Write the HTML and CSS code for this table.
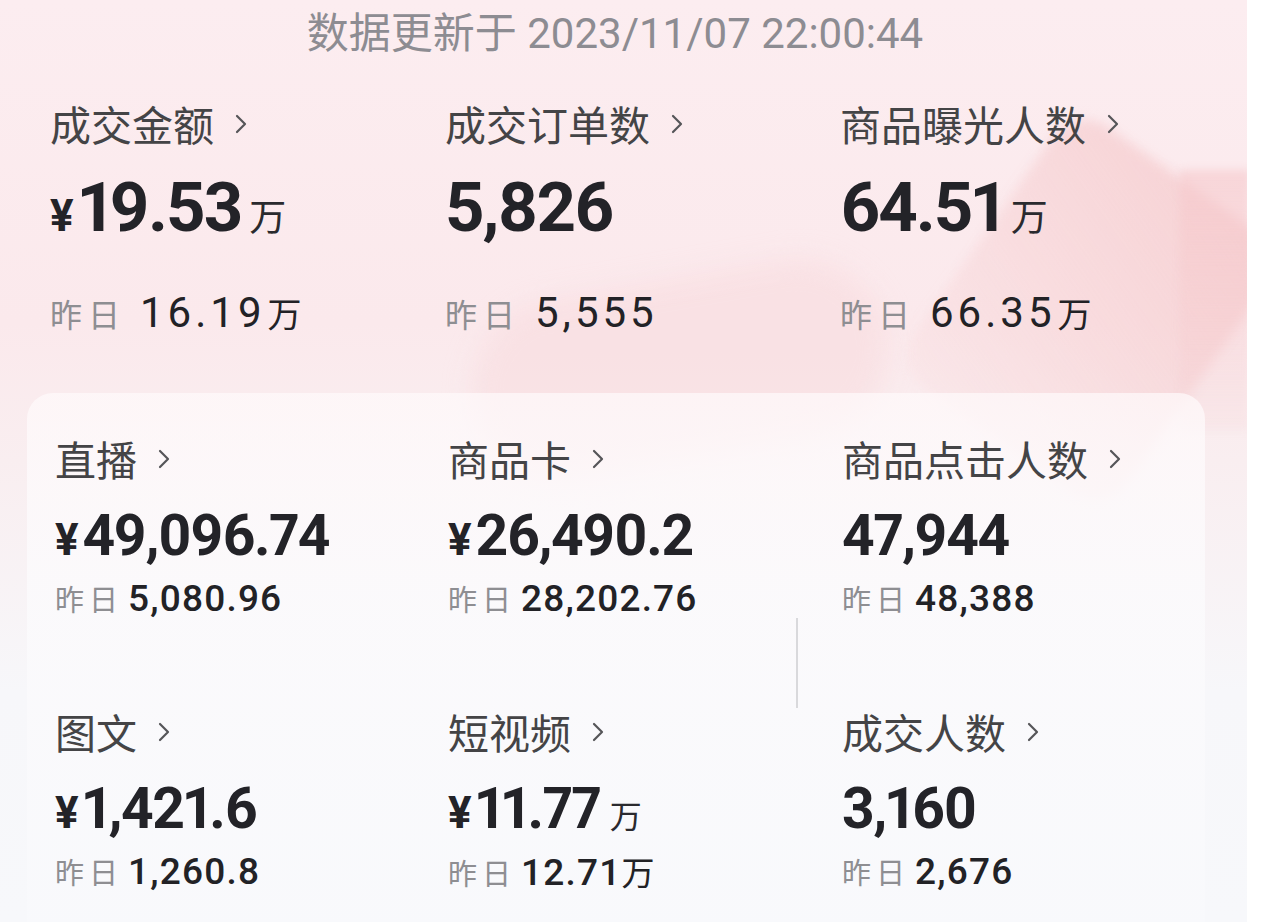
FILE: index.html
```html
<!DOCTYPE html>
<html lang="zh-CN">
<head>
<meta charset="utf-8">
<title>数据概览</title>
<link rel="stylesheet" href="styles.css">
</head>
<body>
<div class="screen">
  <div class="deco deco-a"></div>
  <div class="deco deco-b"></div>
  <div class="deco deco-c"></div>

  <div class="updated">数据更新于 2023/11/07 22:00:44</div>

  <div class="summary">
    <div class="metric">
      <div class="label">成交金额<svg class="chev" viewBox="0 0 12 20"><path d="M2 2 L10 10 L2 18"/></svg></div>
      <div class="value"><span class="cur">¥</span>19.53<span class="unit">万</span></div>
      <div class="prev"><span class="prev-label">昨日</span>16.19<span class="prev-unit">万</span></div>
    </div>
    <div class="metric">
      <div class="label">成交订单数<svg class="chev" viewBox="0 0 12 20"><path d="M2 2 L10 10 L2 18"/></svg></div>
      <div class="value">5,826</div>
      <div class="prev"><span class="prev-label">昨日</span>5,555</div>
    </div>
    <div class="metric">
      <div class="label">商品曝光人数<svg class="chev" viewBox="0 0 12 20"><path d="M2 2 L10 10 L2 18"/></svg></div>
      <div class="value">64.51<span class="unit">万</span></div>
      <div class="prev"><span class="prev-label">昨日</span>66.35<span class="prev-unit">万</span></div>
    </div>
  </div>

  <div class="card">
    <div class="divider"></div>
    <div class="metric">
      <div class="label">直播<svg class="chev" viewBox="0 0 12 20"><path d="M2 2 L10 10 L2 18"/></svg></div>
      <div class="value"><span class="cur">¥</span>49,096.74</div>
      <div class="prev"><span class="prev-label">昨日</span>5,080.96</div>
    </div>
    <div class="metric">
      <div class="label">商品卡<svg class="chev" viewBox="0 0 12 20"><path d="M2 2 L10 10 L2 18"/></svg></div>
      <div class="value"><span class="cur">¥</span>26,490.2</div>
      <div class="prev"><span class="prev-label">昨日</span>28,202.76</div>
    </div>
    <div class="metric">
      <div class="label">商品点击人数<svg class="chev" viewBox="0 0 12 20"><path d="M2 2 L10 10 L2 18"/></svg></div>
      <div class="value">47,944</div>
      <div class="prev"><span class="prev-label">昨日</span>48,388</div>
    </div>
    <div class="metric">
      <div class="label">图文<svg class="chev" viewBox="0 0 12 20"><path d="M2 2 L10 10 L2 18"/></svg></div>
      <div class="value"><span class="cur">¥</span>1,421.6</div>
      <div class="prev"><span class="prev-label">昨日</span>1,260.8</div>
    </div>
    <div class="metric">
      <div class="label">短视频<svg class="chev" viewBox="0 0 12 20"><path d="M2 2 L10 10 L2 18"/></svg></div>
      <div class="value"><span class="cur">¥</span>11.77<span class="unit">万</span></div>
      <div class="prev"><span class="prev-label">昨日</span>12.71<span class="prev-unit">万</span></div>
    </div>
    <div class="metric">
      <div class="label">成交人数<svg class="chev" viewBox="0 0 12 20"><path d="M2 2 L10 10 L2 18"/></svg></div>
      <div class="value">3,160</div>
      <div class="prev"><span class="prev-label">昨日</span>2,676</div>
    </div>
  </div>
</div>
</body>
</html>
```

FILE: styles.css
```css
* { box-sizing: border-box; }

html, body {
  margin: 0;
  padding: 0;
  background: #ffffff;
}

body {
  font-family: "Roboto", "Noto Sans CJK SC", sans-serif;
  color: #222226;
}

.screen {
  position: relative;
  width: 1247px;
  height: 922px;
  overflow: hidden;
  background: linear-gradient(180deg, #fcedf0 0%, #fbe9ec 35%, #f9eef0 50%, #f7f7fa 75%, #f7f8fb 100%);
}

.deco {
  position: absolute;
  pointer-events: none;
}

.deco-a {
  left: 960px;
  top: 150px;
  width: 260px;
  height: 320px;
  border-radius: 40px;
  background: linear-gradient(200deg, rgba(244, 196, 198, 0.65), rgba(248, 214, 216, 0.2));
  transform: rotate(35deg);
  filter: blur(6px);
}

.deco-b {
  left: 1180px;
  top: 170px;
  width: 70px;
  height: 260px;
  background: linear-gradient(180deg, rgba(246, 200, 203, 0.6), rgba(246, 210, 212, 0.2));
  filter: blur(4px);
}

.deco-c {
  left: 470px;
  top: 280px;
  width: 420px;
  height: 180px;
  border-radius: 90px;
  background: rgba(246, 208, 211, 0.35);
  transform: rotate(-10deg);
  filter: blur(14px);
}

.updated {
  position: relative;
  margin-top: 13px;
  height: 42px;
  line-height: 42px;
  font-size: 42px;
  font-weight: 400;
  color: #8d8c92;
  text-align: center;
  padding-right: 17px;
  white-space: nowrap;
}

.summary {
  position: relative;
  display: grid;
  grid-template-columns: 395px 395px 1fr;
  padding-left: 50px;
  padding-top: 48px;
}

.label {
  display: flex;
  align-items: center;
  height: 41px;
  line-height: 41px;
  font-family: "Noto Sans CJK SC", sans-serif;
  font-size: 41px;
  font-weight: 400;
  color: #444446;
  white-space: nowrap;
}

.chev {
  width: 12px;
  height: 20px;
  margin-left: 21px;
  fill: none;
  stroke: #555558;
  stroke-width: 2.2;
  stroke-linecap: round;
  stroke-linejoin: round;
}

.value {
  font-family: "Roboto", sans-serif;
  font-weight: 700;
  color: #232328;
  white-space: nowrap;
  font-variant-numeric: proportional-nums;
}

.summary .value {
  margin-top: 29px;
  height: 70px;
  line-height: 70px;
  font-size: 69px;
  letter-spacing: -2px;
}

.summary .cur {
  font-size: 44px;
  letter-spacing: 0;
  margin-right: 5px;
}

.summary .unit {
  font-family: "Noto Sans CJK SC", sans-serif;
  font-size: 37px;
  font-weight: 400;
  letter-spacing: 0;
  margin-left: 8px;
  color: #2a2a2e;
}

.prev {
  font-family: "Roboto", sans-serif;
  font-weight: 400;
  color: #222226;
  white-space: nowrap;
}

.prev-label {
  font-family: "Noto Sans CJK SC", sans-serif;
  font-weight: 400;
  color: #8e8e92;
}

.summary .prev {
  margin-top: 49px;
  height: 42px;
  line-height: 42px;
  font-size: 42px;
  letter-spacing: 4px;
}

.summary .prev-label {
  font-size: 32px;
  letter-spacing: 6px;
  margin-right: 14px;
}

.summary .prev-unit {
  font-family: "Noto Sans CJK SC", sans-serif;
  font-size: 34px;
  font-weight: 400;
  letter-spacing: 0;
  margin-left: 2px;
}

.card {
  position: relative;
  display: grid;
  grid-template-columns: 393px 394px 1fr;
  align-content: start;
  row-gap: 93px;
  width: 1178px;
  margin-left: 27px;
  margin-top: 59px;
  padding: 45px 0 0 28px;
  height: 560px;
  border-radius: 26px;
  background: linear-gradient(180deg, rgba(255, 250, 251, 0.72) 0%, rgba(251, 250, 252, 0.92) 40%, #f8f9fc 100%);
}

.divider {
  position: absolute;
  left: 769px;
  top: 225px;
  width: 1.5px;
  height: 90px;
  background: #d9d9dc;
}

.card .value {
  margin-top: 28px;
  height: 58px;
  line-height: 58px;
  font-size: 57px;
  letter-spacing: -1.5px;
}

.card .cur {
  font-size: 44px;
  letter-spacing: 0;
  margin-right: 4px;
}

.card .unit {
  font-family: "Noto Sans CJK SC", sans-serif;
  font-size: 32px;
  font-weight: 400;
  letter-spacing: 0;
  margin-left: 10px;
  color: #2a2a2e;
}

.card .prev {
  margin-top: 13px;
  height: 40px;
  line-height: 40px;
  font-size: 37px;
  font-weight: 500;
  letter-spacing: 1.2px;
}

.card .prev-label {
  font-size: 29px;
  font-weight: 400;
  letter-spacing: 5px;
  margin-right: 5px;
}

.card .prev-unit {
  font-family: "Noto Sans CJK SC", sans-serif;
  font-size: 33px;
  font-weight: 400;
  letter-spacing: 0;
}
```
